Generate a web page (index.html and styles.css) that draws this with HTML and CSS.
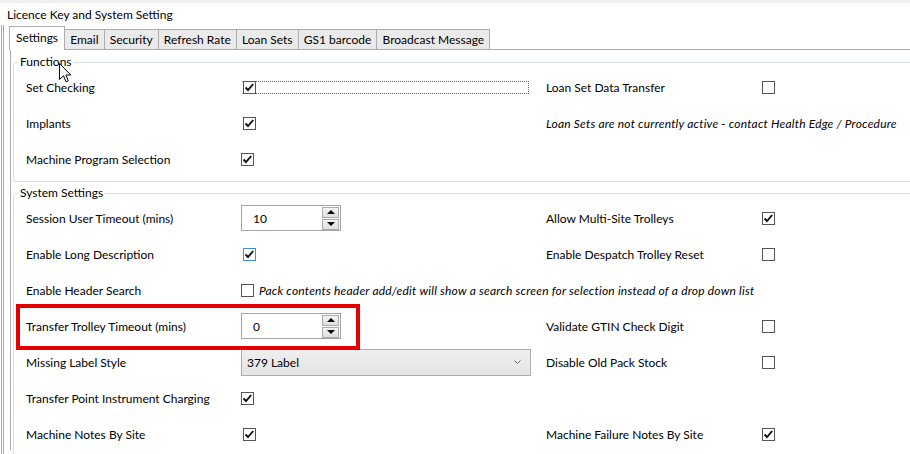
FILE: index.html
```html
<!DOCTYPE html>
<html lang="en">

<head>
    <meta charset="UTF-8" />
    <meta name="viewport" content="width=device-width, initial-scale=1.0" />
    <title>Licence Key and System Setting</title>

    <link rel="stylesheet" href="styles.css">
</head>

<body>
    <div class="title">Licence Key and System Setting</div>

    <div class="frame">
        <div class="tabs">
            <div class="tab active">Settings</div>
            <div class="tab">Email</div>
            <div class="tab">Security</div>
            <div class="tab">Refresh Rate</div>
            <div class="tab">Loan Sets</div>
            <div class="tab">GS1 barcode</div>
            <div class="tab">Broadcast Message</div>
        </div>

        <div class="panel">
            <fieldset class="group">
                <legend>Functions</legend>
                <div class="row">
                    <span>Set Checking</span>
                    <div class="ctl"><span class="focus"><span class="chk on"></span></span></div>
                    <span>Loan Set Data Transfer</span>
                    <div class="ctl"><span class="chk"></span></div>
                </div>
                <div class="row">
                    <span>Implants</span>
                    <div class="ctl"><span class="chk on"></span></div>
                    <span class="note wide">Loan Sets are not currently active - contact Health Edge / Procedure</span>
                </div>
                <div class="row">
                    <span>Machine Program Selection</span>
                    <div class="ctl"><span class="chk on"></span></div>
                </div>
            </fieldset>

            <fieldset class="group">
                <legend>System Settings</legend>
                <div class="row">
                    <span>Session User Timeout (mins)</span>
                    <div class="ctl">
                        <div class="spin"><span>10</span><span class="btns"><span class="up"></span><span class="down"></span></span></div>
                    </div>
                    <span>Allow Multi-Site Trolleys</span>
                    <div class="ctl"><span class="chk on"></span></div>
                </div>
                <div class="row">
                    <span>Enable Long Description</span>
                    <div class="ctl"><span class="chk on hot"></span></div>
                    <span>Enable Despatch Trolley Reset</span>
                    <div class="ctl"><span class="chk"></span></div>
                </div>
                <div class="row">
                    <span>Enable Header Search</span>
                    <div class="ctl inline"><span class="chk"></span><span class="note">Pack contents header add/edit will show a search screen for selection instead of a drop down list</span></div>
                </div>
                <div class="row marked">
                    <span>Transfer Trolley Timeout (mins)</span>
                    <div class="ctl">
                        <div class="spin"><span>0</span><span class="btns"><span class="up"></span><span class="down"></span></span></div>
                    </div>
                    <span>Validate GTIN Check Digit</span>
                    <div class="ctl"><span class="chk"></span></div>
                </div>
                <div class="row">
                    <span>Missing Label Style</span>
                    <div class="ctl">
                        <div class="combo"><span>379 Label</span>
                            <svg width="7" height="4" viewBox="0 0 7 4"><polyline points="0.5,0.5 3.5,3.5 6.5,0.5" fill="none" stroke="#6d6d6d" stroke-width="1" /></svg>
                        </div>
                    </div>
                    <span>Disable Old Pack Stock</span>
                    <div class="ctl"><span class="chk"></span></div>
                </div>
                <div class="row">
                    <span>Transfer Point Instrument Charging</span>
                    <div class="ctl"><span class="chk on"></span></div>
                </div>
                <div class="row">
                    <span>Machine Notes By Site</span>
                    <div class="ctl"><span class="chk on"></span></div>
                    <span>Machine Failure Notes By Site</span>
                    <div class="ctl"><span class="chk on"></span></div>
                </div>
            </fieldset>
        </div>
    </div>

    <svg class="cursor" width="13" height="20" viewBox="0 0 13 20">
        <path d="M0.5 0.5 L0.5 16.5 L4.5 12.8 L7 18.8 L9.3 17.8 L6.9 12 L11.8 12 Z" fill="#fff" stroke="#000" stroke-width="1" stroke-linejoin="miter" />
    </svg>
</body>

</html>
```

FILE: styles.css
```css
body {
    font-family: Lato, "Open Sans", sans-serif;
    font-size: 12px;
    color: #000;
    margin: 0;
    background-color: #fff;
    border-top: 3px solid #efefef;
    height: 451px;
    overflow: hidden;
    position: relative;
}

.title {
    height: 22px;
    padding: 4px 0 0 7px;
    box-sizing: border-box;
    line-height: 16px;
}

.frame {
    margin-left: 1px;
    border-left: 3px double #a9a9a9;
    height: 440px;
}

.tabs {
    display: flex;
    align-items: flex-end;
    height: 24px;
    padding-left: 5px;
}

.tab {
    height: 19px;
    line-height: 19px;
    padding: 0 5.1px;
    margin-left: -1px;
    border: 1px solid #acacac;
    border-bottom: none;
    background-color: #eaeaea;
}

.tab.active {
    position: relative;
    z-index: 1;
    height: 23px;
    line-height: 21px;
    padding: 0 6px;
    margin-left: 0;
    margin-bottom: -1px;
    background-color: #fff;
}

.panel {
    margin-left: 6px;
    padding-left: 1px;
    border-top: 1px solid #acacac;
    border-left: 1px solid #acacac;
    height: 400px;
}

.group {
    margin: 5px -20px 0 1px;
    padding: 0 0 4px 12px;
    border: 1px solid #d5dfe5;
    border-radius: 3px;
}

.group + .group {
    margin-top: 4px;
}

legend {
    margin-left: -8px;
    padding: 0 2px;
    line-height: 14px;
}

.row {
    display: grid;
    grid-template-columns: 215px 305px 216px 1fr;
    align-items: center;
    height: 36px;
}

.row.marked {
    position: relative;
}

.row.marked::before {
    content: "";
    position: absolute;
    left: -10px;
    top: -4px;
    width: 344px;
    height: 46px;
    border: 4px solid #e30000;
    box-sizing: border-box;
}

.ctl {
    display: flex;
    align-items: center;
}

.ctl.inline {
    grid-column: 2 / 5;
    gap: 5px;
}

.note {
    font-style: italic;
    letter-spacing: 0.2px;
}

.note.wide {
    grid-column: 3 / 5;
}

.chk {
    display: block;
    width: 13px;
    height: 13px;
    box-sizing: border-box;
    border: 1px solid #555;
    background: #fff;
    margin-left: 2px;
}

.row > .ctl:last-child .chk {
    margin-left: 0;
}

.chk.on {
    background: #fff url("data:image/svg+xml,%3Csvg xmlns='http://www.w3.org/2000/svg' width='11' height='11' viewBox='0 0 11 11'%3E%3Cpolyline points='1.5,5.5 4,8 9.2,2' fill='none' stroke='%23111' stroke-width='1.9'/%3E%3C/svg%3E") no-repeat center;
}

.chk.hot {
    border-color: #3d8ee0;
}

.focus {
    display: block;
    width: 285px;
    margin-left: 1px;
    border: 1px dotted #666;
    border-left-color: transparent;
}

.focus .chk {
    margin: -1px 0 -1px 0;
}

.spin {
    display: flex;
    align-items: center;
    justify-content: space-between;
    width: 100px;
    height: 26px;
    box-sizing: border-box;
    padding: 0 1px 0 11px;
    border: 1px solid #a0a3a8;
}

.btns {
    display: flex;
    flex-direction: column;
    gap: 1px;
}

.btns span {
    display: flex;
    align-items: center;
    justify-content: center;
    width: 17px;
    height: 11px;
    box-sizing: border-box;
    border: 1px solid #acacac;
    background: linear-gradient(#f4f4f4, #dedede);
}

.btns .up::before {
    content: "";
    border-left: 4px solid transparent;
    border-right: 4px solid transparent;
    border-bottom: 4px solid #000;
}

.btns .down::before {
    content: "";
    border-left: 4px solid transparent;
    border-right: 4px solid transparent;
    border-top: 4px solid #000;
}

.combo {
    display: flex;
    align-items: center;
    justify-content: space-between;
    width: 290px;
    height: 27px;
    box-sizing: border-box;
    padding: 0 9px 0 5px;
    border: 1px solid #acacac;
    background: linear-gradient(#efefef, #e5e5e5);
}

.cursor {
    position: absolute;
    left: 59px;
    top: 60px;
}
```
